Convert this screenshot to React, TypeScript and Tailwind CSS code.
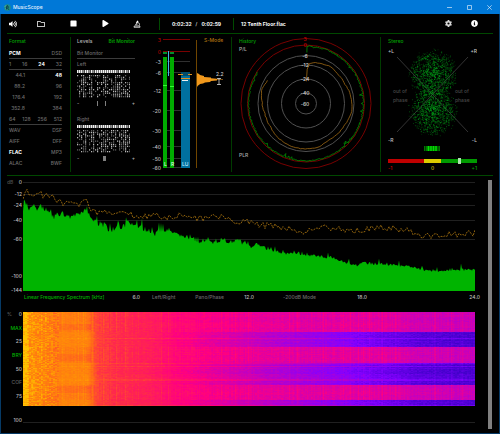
import React, { useEffect, useRef } from 'react';
import { FaInfoCircle, FaPlay, FaRegFolder, FaStop, FaVolumeUp } from 'react-icons/fa';
import { FaGear } from 'react-icons/fa6';

type Point = [number, number];

// Small seeded generator so that the traces are the same on every render
const createRandom = (seed: number) => {
    let s = seed;
    return () => {
        s = (s * 1664525 + 1013904223) % 4294967296;
        return s / 4294967296;
    };
};

const interpolate = (points: Point[], x: number) => {
    for (let i = 1; i < points.length; i++) {
        const [x0, y0] = points[i - 1];
        const [x1, y1] = points[i];
        if (x <= x1) return y0 + ((y1 - y0) * (x - x0)) / (x1 - x0);
    }
    return points[points.length - 1][1];
};

/* ---------- Title bar and toolbar ---------- */

const TitleBar: React.FC = () => (
    <header className="flex h-[14px] items-center bg-[#0078d7] pl-1 text-white">
        <svg viewBox="0 0 16 16" className="h-[7px] w-[7px]">
            <circle cx="8" cy="8" r="7.5" fill="#1c8f88" />
            <path d="M5 13 7 3l3 4-2 3 4 3" fill="none" stroke="#0b3342" strokeWidth="2" />
            <path d="M2 6 5 3M3 11l2 1" stroke="#a9d8b0" strokeWidth="1.5" />
        </svg>
        <span className="ml-[2px] flex-1 text-[#e3f0fb]">MusicScope</span>
        <button aria-label="Minimize" className="flex h-full w-5 items-center justify-center">
            <svg viewBox="0 0 5 5" className="h-[5px] w-[5px]"><path d="M0 2.5h5" stroke="#d5e8f8" strokeWidth=".7" /></svg>
        </button>
        <button aria-label="Maximize" className="flex h-full w-5 items-center justify-center">
            <svg viewBox="0 0 5 5" className="h-[5px] w-[5px]"><path d="M.5.5h4v4h-4z" fill="none" stroke="#d5e8f8" strokeWidth=".7" /></svg>
        </button>
        <button aria-label="Close" className="mr-px flex h-full w-5 items-center justify-center">
            <svg viewBox="0 0 5 5" className="h-[5px] w-[5px]"><path d="m.3.3 4.4 4.4M4.7.3.3 4.7" stroke="#d5e8f8" strokeWidth=".7" /></svg>
        </button>
    </header>
);

const Toolbar: React.FC = () => (
    <div className="flex h-[19px] items-center text-white">
        <button aria-label="Volume" className="flex w-[18px] justify-center pr-[6px]"><FaVolumeUp className="h-2 w-2 shrink-0" /></button>
        <button aria-label="Open folder" className="flex w-8 justify-center"><FaRegFolder className="h-2 w-2" /></button>
        <button aria-label="Stop" className="flex w-8 justify-center"><FaStop className="h-[7px] w-[7px]" /></button>
        <button aria-label="Play" className="flex w-8 justify-center"><FaPlay className="h-[7px] w-[7px]" /></button>
        <button aria-label="Analyze" className="flex w-8 justify-center">
            <svg viewBox="0 0 16 16" className="h-2 w-2" fill="none" stroke="currentColor" strokeWidth="1.5">
                <path d="M8.500 1 11 2.300 8 8 5.500 6.700z" fill="currentColor" stroke="none" />
                <path d="M10 5c3 1 4 4 2 6.500M4 9.500h5" />
                <path d="M2.500 12h11l.5 2.500H2z" />
            </svg>
        </button>
        <div className="ml-[6px] flex h-3 flex-none items-center gap-[3px] border-x border-[#004a00] px-3 font-bold">
            <span>0:02:32</span>
            <span className="px-px font-normal">/</span>
            <span>0:02:59</span>
        </div>
        <span className="ml-[7px] flex-1 font-bold">12 Tenth Floor.flac</span>
        <button aria-label="Settings" className="flex w-[26px] justify-center"><FaGear className="h-[7px] w-[7px] text-[#d8d8d8]" /></button>
        <button aria-label="Information" className="mr-[6px] flex w-[26px] justify-center"><FaInfoCircle className="h-[7px] w-[7px]" /></button>
    </div>
);

/* ---------- Format ---------- */

interface FormatRow {
    cells: string[];
    active?: string;
    ruled?: boolean;
    inset?: boolean;
}

const FORMAT_ROWS: FormatRow[] = [
    { cells: ['PCM', 'DSD'], active: 'PCM', ruled: true },
    { cells: ['1', '16', '24', '32'], active: '24', ruled: true },
    { cells: ['44.1', '48'], active: '48', inset: true },
    { cells: ['88.2', '96'], inset: true },
    { cells: ['176.4', '192'], inset: true },
    { cells: ['352.8', '384'], inset: true },
    { cells: ['64', '128', '256', '512'], ruled: true },
    { cells: ['WAV', 'DSF'] },
    { cells: ['AIFF', 'DFF'] },
    { cells: ['FLAC', 'MP3'], active: 'FLAC' },
    { cells: ['ALAC', 'BWF'] },
];

const FormatPanel: React.FC = () => (
    <section className="w-16 shrink-0 border-r border-[#003c00] pl-[2px] pr-2">
        <h2 className="mb-[3px] text-[#00a000]">Format</h2>
        {FORMAT_ROWS.map((row) => (
            <div
                key={row.cells[0]}
                className={`flex h-[11px] items-center justify-between border-b ${row.ruled ? 'border-[#3c3c3c]' : 'border-transparent'}`}
            >
                {row.cells.map((cell, i) => (
                    <span
                        key={cell}
                        className={`${cell === row.active ? 'font-bold text-white' : 'text-[#6c6c6c]'} ${row.inset && i === 0 ? 'w-4 text-right' : ''}`}
                    >
                        {cell}
                    </span>
                ))}
            </div>
        ))}
    </section>
);

/* ---------- Bit monitor ---------- */

const BitMatrix: React.FC<{ seed: number; marks: { x: number; width: number }[] }> = ({ seed, marks }) => {
    const random = createRandom(seed);
    const columns = Array.from({ length: 27 }, (_, c) => c);
    const rows = Array.from({ length: 13 }, (_, r) => r);
    return (
        <>
            <svg viewBox="0 0 53 29" className="h-[29px] w-[53px]">
                {columns.map((c) => (
                    <rect key={c} x={c * 2} y="1" width="1.5" height="3" fill={random() > 0.15 ? '#f0f0f0' : '#909090'} />
                ))}
                {columns.map((c) => {
                    const density = random() * 0.5 + 0.35;
                    return rows.map((r) => {
                        if (random() > density) return null;
                        return <rect key={`${c}-${r}`} x={c * 2} y={6 + r * 1.75} width="1.2" height="1.3" fill={random() > 0.55 ? '#b8b8b8' : '#606060'} />;
                    });
                })}
            </svg>
            <div className="flex h-[10px] items-center justify-between text-[#b0b0b0]">
                <span>-</span>
                <svg viewBox="0 0 48 5" className="h-[5px] w-12">
                    {marks.map((m) => <rect key={m.x} x={m.x} y="0" width={m.width} height="5" fill="#808080" />)}
                </svg>
                <span>+</span>
            </div>
        </>
    );
};

const BitMonitorPanel: React.FC = () => (
    <section className="w-[74px] shrink-0 pl-[6px] pr-[10px]">
        <div className="mb-[3px] flex justify-between">
            <button className="text-[#b4b4b4]">Levels</button>
            <button className="font-semibold text-[#00a000]">Bit Monitor</button>
        </div>
        <h3 className="flex h-[11px] items-center border-b border-[#3c3c3c] text-[#6c6c6c]">Bit Monitor</h3>
        <h4 className="flex h-[10px] items-center text-[#6c6c6c]">Left</h4>
        <BitMatrix seed={11} marks={[{ x: 16, width: 1 }, { x: 24, width: 1 }]} />
        <h4 className="mt-[6px] flex h-[10px] items-center text-[#6c6c6c]">Right</h4>
        <BitMatrix seed={47} marks={[{ x: 22, width: 3 }]} />
    </section>
);

/* ---------- Level meters ---------- */

const METER_SCALE: [string, number][] = [
    ['3', 3], ['0', 15], ['-3', 25], ['-6', 36], ['-12', 54], ['-20', 74], ['-30', 94], ['-40', 110], ['-50', 122], ['-60', 131],
];

const LevelMeter: React.FC = () => (
    <section className="w-[87px] shrink-0 border-r border-[#003c00]">
        <svg viewBox="0 0 86 134" className="h-[134px] w-[86px] text-[5px]">
            {METER_SCALE.map(([label, y], i) => (
                <g key={label}>
                    <path d={`M18 ${y - 0.5}h27`} stroke={i < 2 ? '#7a0000' : '#303030'} />
                    <text x="16" y={y + 1.5} textAnchor="end" fill={i < 2 ? '#b00000' : '#bcbcbc'}>{label}</text>
                </g>
            ))}
            <path d="M18 15h4v2h-4zM25 15h4v2h-4z" fill="#008f2c" />
            <path d="M18 20h4v111h-4zM25 20h4v111h-4z" fill="#00ab00" />
            <path d="M18 48.500h4M25 49.500h4" stroke="#30ff30" />
            <path d="M23.500 14v25" stroke="#46b4e6" />
            <path d="M36 35h9v96h-9z" fill="#0070a0" />
            <path d="M36 35h9v4h-9z" fill="#004c6c" />
            <path d="M33 37.500h5M43 37.500h4M36 41.500h9" stroke="#e09020" />
            <path d="M37 43.500h6" stroke="#f0f0f0" />
            <text x="19" y="129" fill="#e0ffe0">L</text>
            <text x="26" y="129" fill="#e0ffe0">R</text>
            <text x="37" y="129" fill="#c0e8ff">LU</text>
            <path d="M51.500 3v128" stroke="#704600" />
            <path d="m52 36 2 1 1 1 4 1v1l7 .5v.8l6 .5v.4h6v.6h-6v.7l-6 .5-1 1-5 .6-2 1-3 .5-1 1-1 .5-1 1.400z" fill="#f0981c" />
            <text x="59" y="5" fill="#b47410">S-Mode</text>
            <text x="71" y="39" fill="#c8c8c8">2.2</text>
            <path d="M72 41.500h4M72 47.500h4M74 41v6.500" stroke="#d8d8d8" strokeWidth=".8" />
        </svg>
    </section>
);

/* ---------- History ---------- */

const CENTER = { x: 74, y: 66.5 };

const RINGS = [
    { r: 65, label: '3', color: '#780000', text: '#c80000' },
    { r: 58.5, label: '0', color: '#780000', text: '#c80000' },
    { r: 48, label: '-6', color: '#505050', text: '#d0d0d0' },
    { r: 38.5, label: '-12', color: '#505050', text: '#d0d0d0' },
    { r: 24.5, label: '-24', color: '#505050', text: '#d0d0d0' },
    { r: 10.5, label: '-40', color: '#505050', text: '#d0d0d0' },
    { r: 0, label: '-60', color: 'none', text: '#d0d0d0' },
];

const LOUDNESS_TRACE: Point[] = [
    [1, 22], [2, 34], [5, 40], [10, 41], [20, 42], [33, 44], [48, 43], [62, 43], [80, 45], [100, 46],
    [120, 44], [140, 43], [154, 43], [162, 45], [175, 45], [190, 45], [215, 44], [240, 42], [258, 42], [275, 44], [288, 46], [300, 44], [303, 45],
];

const polar = (angle: number, radius: number) => {
    const a = ((angle - 90) * Math.PI) / 180;
    return `${(CENTER.x + Math.cos(a) * radius).toFixed(2)} ${(CENTER.y + Math.sin(a) * radius).toFixed(2)}`;
};

const HistoryPanel: React.FC = () => {
    const random = createRandom(5);
    const peaks: string[] = [polar(1, 51)];
    const loudness: string[] = [];
    for (let a = 1; a <= 303; a += 1) {
        const dip = random() > 0.93 ? random() * 3 : 0;
        peaks.push(polar(a, 58 - random() * 1.3 - dip));
        if (a < 6 || a % 3 === 1) loudness.push(polar(a, interpolate(LOUDNESS_TRACE, a) + random() * 0.8));
    }
    return (
        <section className="min-w-0 flex-1">
            <svg viewBox="0 0 148 134" className="h-[134px] w-full text-[5px]">
                <text x="7" y="6" fill="#00a000">History</text>
                <text x="7" y="14" fill="#acacac">P/L</text>
                <text x="7" y="120" fill="#acacac">PLR</text>
                {RINGS.map((ring) => (
                    <circle key={ring.label} cx={CENTER.x} cy={CENTER.y} r={ring.r} fill="none" stroke={ring.color} />
                ))}
                <path d={`M${peaks.join('L')}`} fill="none" stroke="#009000" strokeWidth=".8" />
                <path d={`M${loudness.join('L')}`} fill="none" stroke="#a06a14" strokeWidth=".8" />
                {RINGS.map((ring) => (
                    <text key={ring.label} x={CENTER.x - 1} y={CENTER.y - ring.r + 2} textAnchor="middle" fill={ring.text}>{ring.label}</text>
                ))}
            </svg>
        </section>
    );
};

/* ---------- Stereo ---------- */

const StereoPanel: React.FC = () => {
    const random = createRandom(77);
    const dots = Array.from({ length: 2300 }, () => {
        const lower = random() > 0.5;
        const angle = random() * Math.PI * 2;
        const radius = Math.pow(random(), 0.6);
        return {
            x: 44.5 + Math.cos(angle) * radius * 21 + (random() - 0.5) * 8,
            y: (lower ? 66 : 29) + Math.sin(angle) * radius * 23 + (random() - 0.5) * 6,
            opacity: (0.2 + random() * 0.65 * (1.15 - radius * 0.6)).toFixed(2),
        };
    });
    return (
        <section className="w-[113px] shrink-0 border-l border-[#003c00] pl-[7px] pr-4">
            <h2 className="text-[#00a000]">Stereo</h2>
            <svg viewBox="0 0 89 112" className="h-28 w-full text-[5px]">
                <path d="m9 12 71 75M80 12 9 87" stroke="#404040" strokeWidth=".8" />
                {dots.map((d, i) => (
                    <rect key={i} x={d.x} y={d.y} width=".9" height=".9" fill="#00a81c" opacity={d.opacity} />
                ))}
                <g fill="#c0c0c0">
                    <text x="0" y="8">+L</text>
                    <text x="89" y="8" textAnchor="end">+R</text>
                    <text x="0" y="97">-R</text>
                    <text x="89" y="97" textAnchor="end">-L</text>
                </g>
                <g fill="#484848">
                    <text x="5" y="48">out of</text>
                    <text x="5" y="57">phase</text>
                    <text x="67" y="48">out of</text>
                    <text x="67" y="57">phase</text>
                </g>
                <path d="M36 101h16v5h-16z" fill="#007800" />
                <path d="M40.500 101v5M43 101v5M45.500 101v5M48 101v5" stroke="#00e000" strokeWidth="1.400" />
                <path d="M37.500 101v5M50 101v5" stroke="#003000" strokeWidth=".8" />
            </svg>
            <div className="mt-[2px] flex h-1">
                <div className="w-2/5 bg-[#c00000]" />
                <div className="w-1/5 bg-[#dccb00]" />
                <div className="flex flex-1 justify-center bg-[#009a00]">
                    <div className="-my-px h-[6px] w-[3px] bg-[#b0e0b0]" />
                </div>
            </div>
            <div className="mt-px flex justify-between">
                <span className="w-2 text-[#d80000]">-1</span>
                <span className="text-[#c8b800]">0</span>
                <span className="w-2 text-right text-[#00a000]">+1</span>
            </div>
        </section>
    );
};

/* ---------- Frequency spectrum ---------- */

const LEVEL_ENVELOPE: Point[] = [
    [0, 30], [1, 17], [4, 22], [7, 26], [10, 22], [14, 27], [17, 20], [21, 26], [26, 29], [31, 34], [37, 30], [44, 33], [50, 34],
    [57, 29], [63, 27], [67, 33], [74, 40], [80, 41], [87, 47], [92, 45], [99, 44], [105, 39], [110, 42], [117, 45], [124, 46],
    [130, 52], [137, 50], [144, 46], [150, 50], [157, 51], [164, 54], [170, 54], [177, 59], [184, 55], [190, 58], [200, 57],
    [211, 59], [217, 58], [225, 61], [227, 67], [232, 61], [244, 66], [260, 71], [277, 71], [294, 74], [310, 75], [324, 80],
    [334, 83], [340, 80], [360, 82], [377, 83], [390, 85], [407, 88], [427, 88], [440, 87], [452, 87],
];

const PEAK_ENVELOPE: Point[] = [
    [0, 19], [2, 8], [7, 13], [14, 12], [20, 13], [30, 16], [44, 22], [54, 22], [65, 20], [70, 30], [87, 31], [104, 31], [120, 35],
    [130, 33], [144, 36], [160, 33], [177, 37], [197, 35], [210, 40], [227, 40], [237, 43], [260, 45], [280, 49], [294, 45],
    [310, 47], [337, 49], [350, 46], [367, 46], [384, 49], [400, 54], [420, 53], [444, 51], [452, 51],
];

const SPECTRUM_SCALE: [string, number][] = [
    ['0', 0], ['-12', 12], ['-24', 23], ['-40', 38], ['-60', 57], ['-100', 94], ['-144', 108],
];

const SpectrumChart: React.FC = () => {
    const random = createRandom(21);
    const levels: string[] = [];
    const peaks: string[] = [];
    for (let x = 0; x <= 452; x += 1) {
        const low = x < 225;
        const spike = random() > 0.88 ? random() * (low ? 9 : 5) : 0;
        levels.push(`${x} ${(interpolate(LEVEL_ENVELOPE, x) + (random() - 0.3) * (low ? 6 : 3) - spike).toFixed(1)}`);
        if (x % 2 === 0) peaks.push(`${x} ${(interpolate(PEAK_ENVELOPE, x) + (random() - 0.5) * 7).toFixed(1)}`);
    }
    return (
        <div className="flex">
            <svg viewBox="0 0 16 120" className="h-[120px] w-4 shrink-0 text-[5px]">
                <text x="0" y="8" fill="#505050">dB</text>
                {SPECTRUM_SCALE.map(([label, y]) => (
                    <text key={label} x="15" y={y + 8} textAnchor="end" fill="#bcbcbc">{label}</text>
                ))}
            </svg>
            <div className="min-w-0 flex-1 pt-[6px]">
                <svg viewBox="0 0 452 109" preserveAspectRatio="none" className="h-[109px] w-full">
                    {SPECTRUM_SCALE.map(([label, y]) => (
                        <path key={label} d={`M0 ${y + 0.5}h452`} stroke="#202020" />
                    ))}
                    <path d={`M0 109L${levels.join('L')}L452 109z`} fill="#00b400" />
                    <path d={`M${peaks.join('L')}`} fill="none" stroke="#b07810" strokeWidth=".8" strokeDasharray="2 1" />
                </svg>
                <div className="grid grid-cols-4 pt-[2px] text-[#6c6c6c]">
                    <div className="flex justify-between">
                        <button className="whitespace-nowrap pl-px text-[#00b400]">Linear Frequency Spectrum [kHz]</button>
                        <span className="-mr-1 text-[#bcbcbc]">6.0</span>
                    </div>
                    <div className="flex">
                        <button className="pl-4">Left/Right</button>
                        <button className="pl-5">Pano/Phase</button>
                        <span className="-mr-[5px] ml-auto text-[#bcbcbc]">12.0</span>
                    </div>
                    <div className="flex justify-between">
                        <button className="pl-[34px]">-200dB Mode</button>
                        <span className="-mr-[5px] text-[#bcbcbc]">18.0</span>
                    </div>
                    <span className="-mr-[5px] text-right text-[#bcbcbc]">24.0</span>
                </div>
            </div>
        </div>
    );
};

/* ---------- Spectrogram ---------- */

const HEAT_COLORS: [number, number, number][] = [
    [30, 0, 150], [70, 0, 205], [132, 0, 255], [196, 0, 190], [255, 0, 128], [255, 40, 76], [255, 100, 28], [255, 140, 8], [255, 196, 0],
];

const LOUD_PROFILE: Point[] = [
    [0, 8], [4, 7.8], [6, 7.1], [35, 6.5], [36, 6.6], [62, 6.6], [74, 5.4], [90, 5.1], [125, 4.8], [150, 4.3], [180, 4], [220, 3.7], [280, 3.5], [360, 3.5], [400, 3.2], [452, 3.1],
];

const QUIET_PROFILE: Point[] = [
    [0, 8], [4, 7.8], [6, 7.1], [35, 6.6], [36, 6.8], [64, 6.8], [74, 5.4], [90, 5.1], [125, 4.8], [150, 4.2], [180, 3.7], [210, 3.3], [250, 2.8], [300, 2.3], [360, 1.7], [400, 1.3], [452, 1.1],
];

const isQuiet = (y: number) => (y >= 20 && y < 35) || (y >= 51 && y < 73) || y >= 88;

const Spectrogram: React.FC = () => {
    const canvasRef = useRef<HTMLCanvasElement>(null);

    useEffect(() => {
        const canvas = canvasRef.current;
        const ctx = canvas?.getContext('2d');
        if (!canvas || !ctx) return;

        const { width, height } = canvas;
        const random = createRandom(99);
        const columnNoise = Array.from({ length: width }, () => (random() > 0.93 ? 0.35 : (random() - 0.5) * 0.3));
        const image = ctx.createImageData(width, height);

        for (let y = 0; y < height; y++) {
            const quiet = isQuiet(y);
            const rowNoise = quiet && random() > 0.8 ? 0.5 : (random() - 0.5) * 0.25;
            let grain = 0;
            for (let x = 0; x < width; x++) {
                if (x % 2 === 0) grain = (random() - 0.5) * (x < 35 ? 1.2 : 0.35);
                const rowShare = Math.min(1, x / 150);
                const base = interpolate(quiet ? QUIET_PROFILE : LOUD_PROFILE, x);
                const muted = x > 35 && x < 68 && ((y > 11 && y < 18) || (y > 41 && y < 49) || (y > 73 && y < 81)) ? 0.35 : 0;
                const level = base + rowNoise * rowShare + columnNoise[x] * (quiet ? 0.4 : 1) + grain - muted;
                const clamped = Math.max(0, Math.min(HEAT_COLORS.length - 1.001, level));
                const index = Math.floor(clamped);
                const t = clamped - index;
                const offset = (y * width + x) * 4;
                for (let c = 0; c < 3; c++) {
                    image.data[offset + c] = HEAT_COLORS[index][c] * (1 - t) + HEAT_COLORS[index + 1][c] * t;
                }
                image.data[offset + 3] = 255;
            }
        }
        ctx.putImageData(image, 0, 0);
    }, []);

    return (
        <div className="mt-[9px] flex">
            <div className="w-4 shrink-0 pr-px text-right text-[#bcbcbc]">
                <div className="flex h-[90px] flex-col justify-between">
                    <div className="flex justify-between"><span className="text-[#606060]">%</span><span>0</span></div>
                    <button className="self-end text-[#00b400]">MAX</button>
                    <span>25</span>
                    <button className="self-end text-[#00b400]">BRY</button>
                    <span>50</span>
                    <button className="self-end text-[#606060]">COF</button>
                    <span>75</span>
                </div>
                <div className="mt-4">100</div>
            </div>
            <div className="min-w-0 flex-1">
                <canvas ref={canvasRef} width={452} height={94} className="mt-[2px] block h-[94px] w-full" />
                <div className="mt-4 border-t border-[#202020]" />
            </div>
        </div>
    );
};

const App: React.FC = () => (
    <div className="flex min-h-screen flex-col bg-black font-['Inter','Liberation_Sans',sans-serif] text-[5px] font-medium leading-[8px]">
        <TitleBar />
        <main className="flex flex-1 flex-col border-x border-b border-[#063a66] px-[6px]">
            <Toolbar />
            <div className="flex border-y border-[#004800] py-[3px]">
                <FormatPanel />
                <BitMonitorPanel />
                <LevelMeter />
                <HistoryPanel />
                <StereoPanel />
            </div>
            <div className="flex flex-1">
                <div className="min-w-0 flex-1">
                    <SpectrumChart />
                    <Spectrogram />
                </div>
                <div className="mb-1 ml-[13px] mr-px mt-1 w-1 bg-[#808080]" />
            </div>
        </main>
    </div>
);

export default App;
